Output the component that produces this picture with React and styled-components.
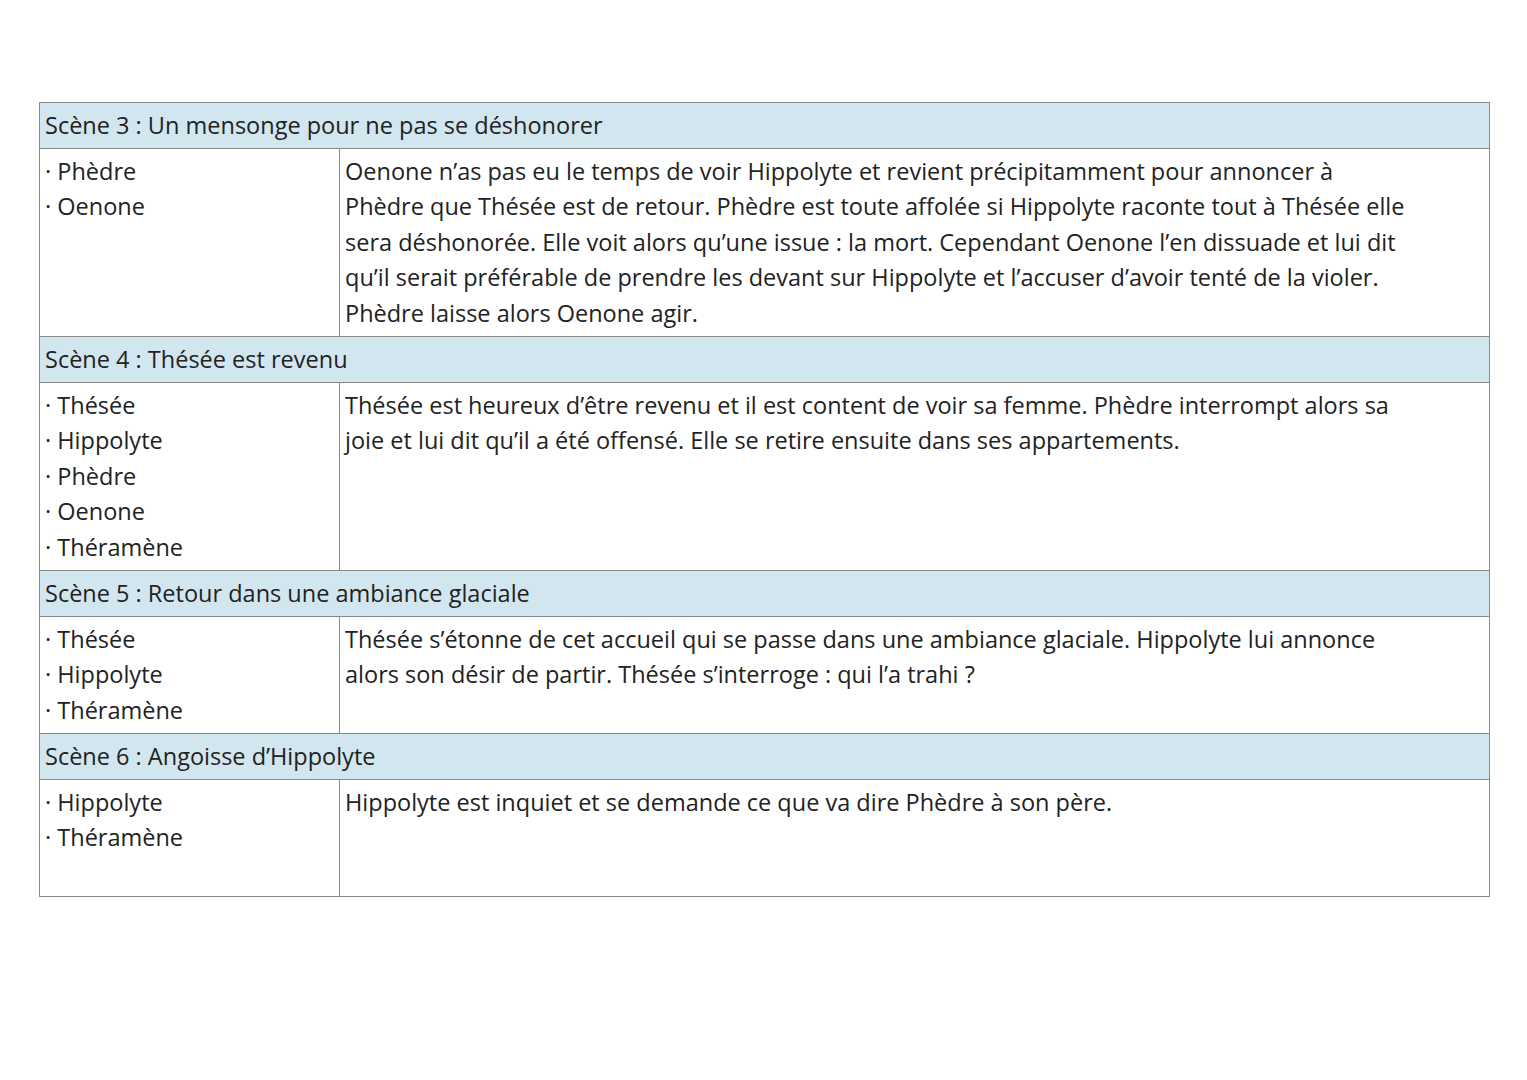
import React from 'react'
import styled, { createGlobalStyle } from 'styled-components'

const Global = createGlobalStyle`
  body { margin: 0; background: #fff; }
`

const Page = styled.div`
  padding: 102px 39px 0 39px;
  width: 1527px;
  box-sizing: border-box;
  font-family: "Open Sans", "Noto Sans", sans-serif;
  font-size: 23.5px;
  color: #222;
`

const Table = styled.div`
  width: 1449px;
  border: 1px solid #8a8a8a;
  border-bottom: none;
`

const Head = styled.div`
  background: #d2e6ef;
  border-bottom: 1px solid #8a8a8a;
  padding: 5px 5px 4px;
  line-height: 35.5px;
  white-space: nowrap;
`

const Row = styled.div`
  display: grid;
  grid-template-columns: 299px 1fr;
  border-bottom: 1px solid #8a8a8a;
  min-height: ${p => p.$min || 0}px;
`

const Cell = styled.div`
  padding: 5px 5px 5px;
  line-height: 35.5px;
  white-space: nowrap;
  & + & { border-left: 1px solid #8a8a8a; }
`

const Line = styled.div``

const scenes = [
  {
    title: 'Scène 3 : Un mensonge pour ne pas se déshonorer',
    people: ['Phèdre', 'Oenone'],
    text: [
      'Oenone n’as pas eu le temps de voir Hippolyte et revient précipitamment pour annoncer à',
      'Phèdre que Thésée est de retour. Phèdre est toute affolée si Hippolyte raconte tout à Thésée elle',
      'sera déshonorée. Elle voit alors qu’une issue : la mort. Cependant Oenone l’en dissuade et lui dit',
      'qu’il serait préférable de prendre les devant sur Hippolyte et l’accuser d’avoir tenté de la violer.',
      'Phèdre laisse alors Oenone agir.',
    ],
  },
  {
    title: 'Scène 4 : Thésée est revenu',
    people: ['Thésée', 'Hippolyte', 'Phèdre', 'Oenone', 'Théramène'],
    text: [
      'Thésée est heureux d’être revenu et il est content de voir sa femme. Phèdre interrompt alors sa',
      'joie et lui dit qu’il a été offensé. Elle se retire ensuite dans ses appartements.',
    ],
  },
  {
    title: 'Scène 5 : Retour dans une ambiance glaciale',
    people: ['Thésée', 'Hippolyte', 'Théramène'],
    text: [
      'Thésée s’étonne de cet accueil qui se passe dans une ambiance glaciale. Hippolyte lui annonce',
      'alors son désir de partir. Thésée s’interroge : qui l’a trahi ?',
    ],
  },
  {
    title: 'Scène 6 : Angoisse d’Hippolyte',
    people: ['Hippolyte', 'Théramène'],
    text: ['Hippolyte est inquiet et se demande ce que va dire Phèdre à son père.'],
    min: 116,
  },
]

export default function App() {
  return (
    <Page>
      <Global />
      <Table>
        {scenes.map((s, i) => (
          <React.Fragment key={i}>
            <Head>{s.title}</Head>
            <Row $min={s.min}>
              <Cell>{s.people.map(p => <Line key={p}>· {p}</Line>)}</Cell>
              <Cell>{s.text.map((t, j) => <Line key={j}>{t}</Line>)}</Cell>
            </Row>
          </React.Fragment>
        ))}
      </Table>
    </Page>
  )
}
